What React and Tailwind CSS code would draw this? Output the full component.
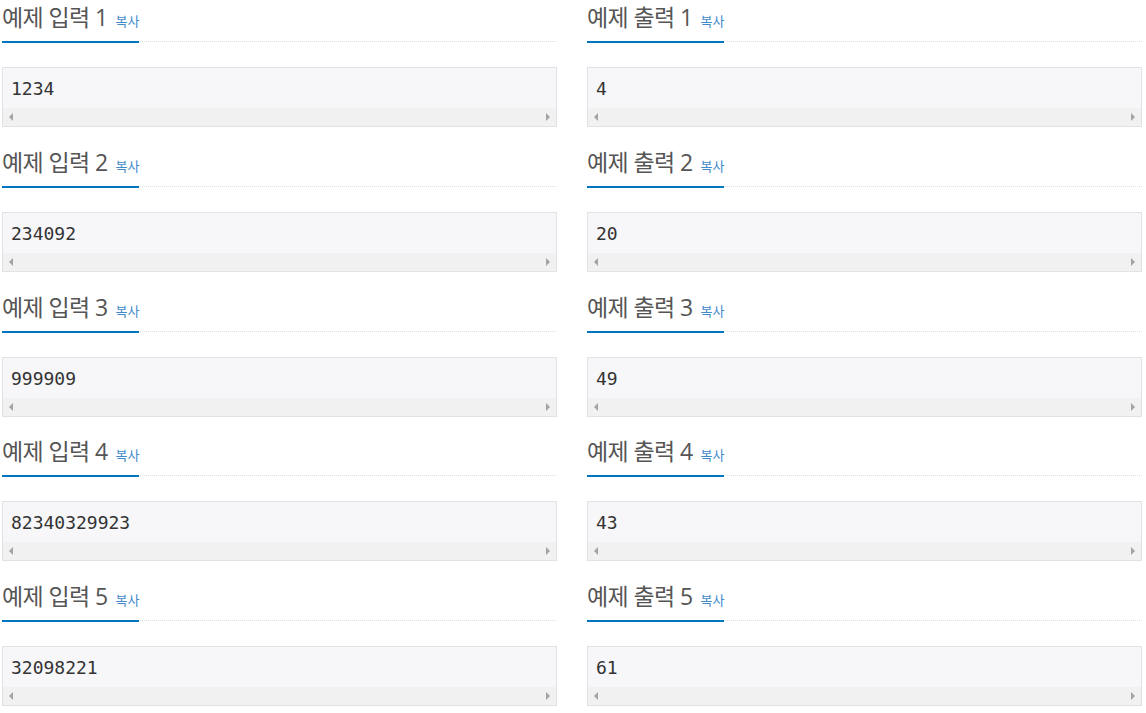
import React from "react";

const inputs = ["1234", "234092", "999909", "82340329923", "32098221"];
const outputs = ["4", "20", "49", "43", "61"];

function Headline({ title }) {
  return (
    <div className="flex h-[42px] items-end border-b border-dotted border-[#dcdfe6]">
      <h2
        className="mb-[-2px] flex items-baseline border-b-2 border-[#0076c0] pb-[7px] text-[23px] leading-[26px] tracking-[-0.6px] text-[#555]"
        style={{ fontFamily: '"Open Sans", "Noto Sans CJK KR", sans-serif' }}
      >
        <span>{title}</span>
        <span className="ml-[8px] text-[13px] tracking-normal text-[#428bca]">복사</span>
      </h2>
    </div>
  );
}

function Sample({ value }) {
  return (
    <div className="mt-[25px] flex h-[60px] flex-col border border-[#e1e1e8] bg-[#f7f7f9]">
      <div
        className="flex h-[40px] items-center pl-[8px] pt-[1px] text-[18px] text-[#333]"
        style={{ fontFamily: '"DejaVu Sans Mono", monospace' }}
      >
        {value}
      </div>
      <div className="flex h-[18px] items-center justify-between bg-[#f1f1f1] px-[6px]">
        <svg width="5" height="8" viewBox="0 0 5 8">
          <path d="M4 0 L0 4 L4 8 Z" fill="#a3a3a3" />
        </svg>
        <svg width="5" height="8" viewBox="0 0 5 8">
          <path d="M1 0 L5 4 L1 8 Z" fill="#a3a3a3" />
        </svg>
      </div>
    </div>
  );
}

export default function App() {
  return (
    <div className="min-h-[713px] bg-white pl-[2px]">
      <div className="flex flex-col gap-[17.75px]">
        {inputs.map((inp, i) => (
          <div key={i} className="flex gap-[30px]">
            <div className="w-[555px]">
              <Headline title={`예제 입력 ${i + 1}`} />
              <Sample value={inp} />
            </div>
            <div className="w-[555px]">
              <Headline title={`예제 출력 ${i + 1}`} />
              <Sample value={outputs[i]} />
            </div>
          </div>
        ))}
      </div>
    </div>
  );
}
